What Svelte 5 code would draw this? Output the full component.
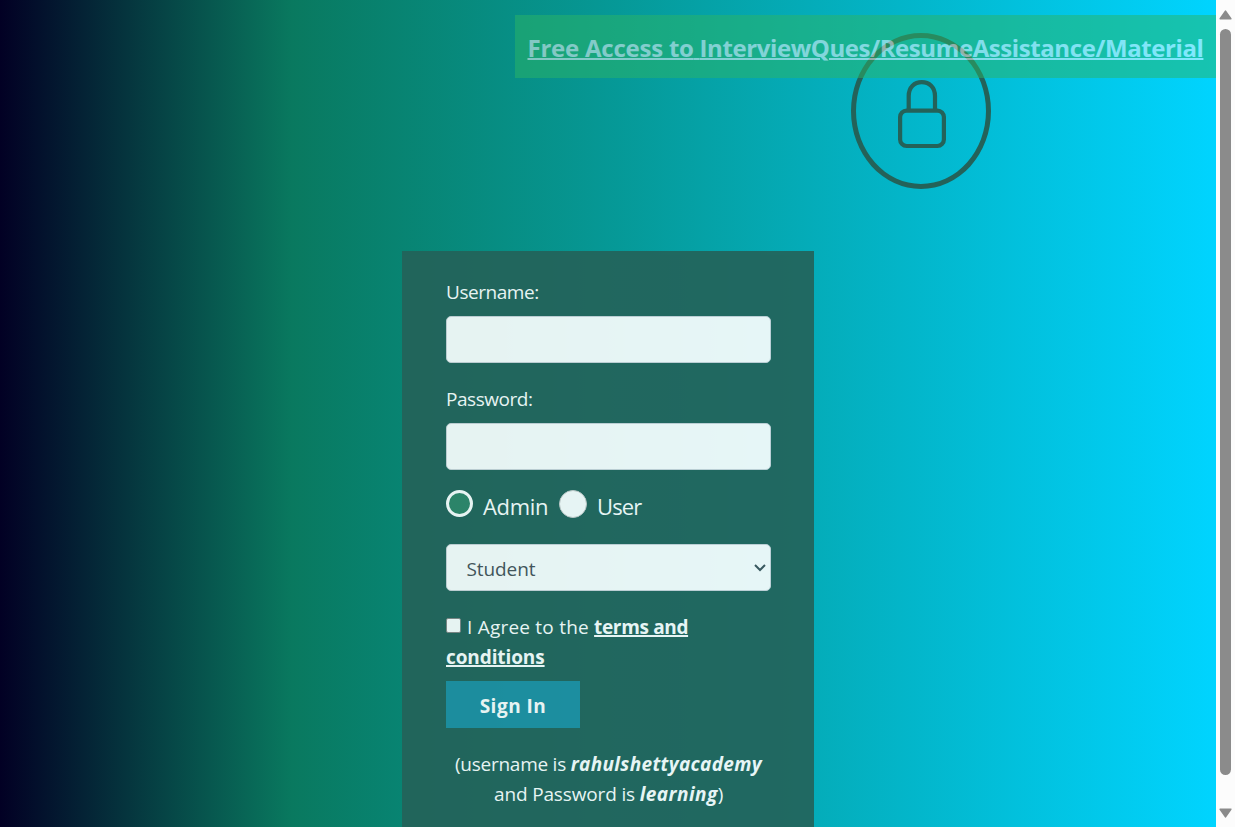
<script>
  let username = $state('');
  let password = $state('');
  let role = $state('admin');
  let agreed = $state(false);
</script>

<div class="window">
  <main class="page">
    <div class="emblem">
      <svg width="48" height="69" viewBox="0 0 48 69" fill="none" stroke="#246259" stroke-width="4.2">
        <rect x="2.1" y="30.6" width="43.8" height="35.4" rx="6.5" />
        <path d="M10.7 30V16C10.7 7 16.5 2.1 23.8 2.1S37 7 37 16V30" />
      </svg>
    </div>
    <a class="banner" href="#top"><span class="lead">Free Access to</span>{' '}<span>InterviewQues/ResumeAssistance/Material</span></a>

    <form class="card">
      <label for="username">Username:</label>
      <input class="field" id="username" type="text" bind:value={username} />
      <label for="password">Password:</label>
      <input class="field" id="password" type="password" bind:value={password} />

      <div class="roles">
        <button type="button" class="dot" class:checked={role === 'admin'} onclick={() => (role = 'admin')} aria-label="Admin"></button>
        <span class="admin">Admin</span>
        <button type="button" class="dot second" class:checked={role === 'user'} onclick={() => (role = 'user')} aria-label="User"></button>
        <span class="user">User</span>
      </div>

      <div class="select">
        <span>Student</span>
        <svg width="12" height="8" viewBox="0 0 12 8" fill="none" stroke="#3f5158" stroke-width="2"><path d="M1 1L6 6L11 1" /></svg>
      </div>

      <div class="agree">
        <button type="button" class="box" aria-label="Agree" aria-pressed={agreed} onclick={() => (agreed = !agreed)}></button><span>I Agree to the</span>{' '}<a class="terms" href="#terms">terms and</a><br /><a class="conditions" href="#terms">conditions</a>
      </div>

      <button type="button" class="signin"><span>Sign In</span></button>

      <p class="hint">
        <span>(username is</span>{' '}<b>rahulshettyacademy</b><br /><span class="second-line">and Password is</span>{' '}<b class="word">learning</b><span>)</span>
      </p>
    </form>
  </main>

  <aside class="scrollbar">
    <svg width="13" height="10" viewBox="0 0 13 10"><path d="M1.2 8.8L6.5 1.2L11.8 8.8Z" fill="#8b8b8b" stroke="#8b8b8b" stroke-width="1.6" stroke-linejoin="round" /></svg>
    <div class="thumb"></div>
    <svg width="13" height="10" viewBox="0 0 13 10"><path d="M1.2 1.2L6.5 8.8L11.8 1.2Z" fill="#8b8b8b" stroke="#8b8b8b" stroke-width="1.6" stroke-linejoin="round" /></svg>
  </aside>
</div>

<style>
  :global(body) { margin: 0; overflow: hidden; }
  * { box-sizing: border-box; }
  .window {
    display: grid;
    grid-template-columns: 1216px 19px;
    height: 827px;
    overflow: hidden;
    font: 19px/30px 'Open Sans', 'Noto Sans', sans-serif;
  }
  .page {
    position: relative;
    height: 827px;
    overflow: hidden;
    padding-top: 33px;
    background: linear-gradient(90deg, #020024 0%, #09795f 24%, #00d4ff 100%);
  }
  .emblem {
    width: 140px;
    height: 156px;
    margin-left: 851px;
    padding: 42px 0 0 2px;
    border: 5px solid #246259;
    border-radius: 50%;
    text-align: center;
    line-height: 0;
  }
  .banner {
    position: absolute;
    top: 15px;
    right: 0;
    width: 701px;
    height: 63px;
    padding-left: 12.5px;
    background: #2cb566;
    opacity: .5;
    color: #fff;
    font-size: 24px;
    font-weight: 700;
    line-height: 66px;
    letter-spacing: -.41px;
    white-space: pre;
    text-decoration-thickness: 2px;
  }
  .lead { letter-spacing: -.23px; }
  .card {
    width: 412px;
    height: 600px;
    margin: 62px 0 0 402px;
    padding: 26px 43px 0 44px;
    background: #246259;
    opacity: .9;
    color: #fff;
  }
  label { display: block; height: 30px; margin-bottom: 9px; letter-spacing: -.45px; white-space: nowrap; }
  .field {
    display: block;
    width: 325px;
    height: 47px;
    margin: 0 0 21px;
    padding: 6px 20px;
    border: 1px solid #ced4da;
    border-radius: 5px;
    background: #fff;
    font: inherit;
    outline: none;
  }
  .roles { display: flex; align-items: flex-start; height: 28px; margin-top: -1px; font-size: 22px; line-height: 32px; white-space: nowrap; }
  .dot { flex: none; width: 28px; height: 28px; padding: 0; border: 1px solid #ccc; border-radius: 50%; background: #fff; }
  .dot.checked { width: 27px; height: 27px; border: 3px solid #fff; background: #308468; }
  .admin { width: 66px; margin-left: 10px; letter-spacing: -.3px; }
  .dot.second { margin-left: 10px; }
  .user { margin-left: 10px; letter-spacing: -.85px; }
  .select {
    display: flex;
    align-items: center;
    justify-content: space-between;
    width: 325px;
    height: 47px;
    margin-top: 26px;
    padding: 2px 4px 0 19.5px;
    border: 1px solid #ced4da;
    border-radius: 5px;
    background: #fff;
    color: #495057;
    letter-spacing: -.1px;
  }
  .select svg { margin-top: -2px; }
  .agree { height: 60px; margin-top: 21px; letter-spacing: .22px; white-space: nowrap; }
  .box { width: 15px; height: 15px; margin: 0 6px 0 0; padding: 0; border: 1px solid #858585; border-radius: 2px; background: #fff; vertical-align: 2px; }
  .agree a { color: #fff; font-weight: 700; text-decoration-thickness: 2px; }
  .agree .terms { letter-spacing: -.35px; }
  .agree .conditions { letter-spacing: -.1px; }
  .signin {
    display: block;
    width: 134px;
    height: 47px;
    margin-top: 9px;
    padding: 2px 0 0;
    border: 0;
    background: #1f8ea2;
    color: #fff;
    font: 700 19px/30px 'Open Sans', sans-serif;
    letter-spacing: .5px;
    text-align: center;
  }
  .hint { margin: 21px 0 0; letter-spacing: -.25px; text-align: center; white-space: nowrap; }
  .hint b { font-style: italic; letter-spacing: .35px; }
  .hint .second-line { letter-spacing: -.15px; }
  .hint .word { letter-spacing: .45px; }
  .scrollbar {
    display: flex;
    flex-direction: column;
    align-items: center;
    height: 827px;
    padding-top: 10px;
    background: #fcfcfc;
  }
  .thumb { width: 11px; height: 746px; margin: 9px 0 33px; border-radius: 6px; background: #8b8b8b; }
  .scrollbar svg { flex: none; }
</style>
